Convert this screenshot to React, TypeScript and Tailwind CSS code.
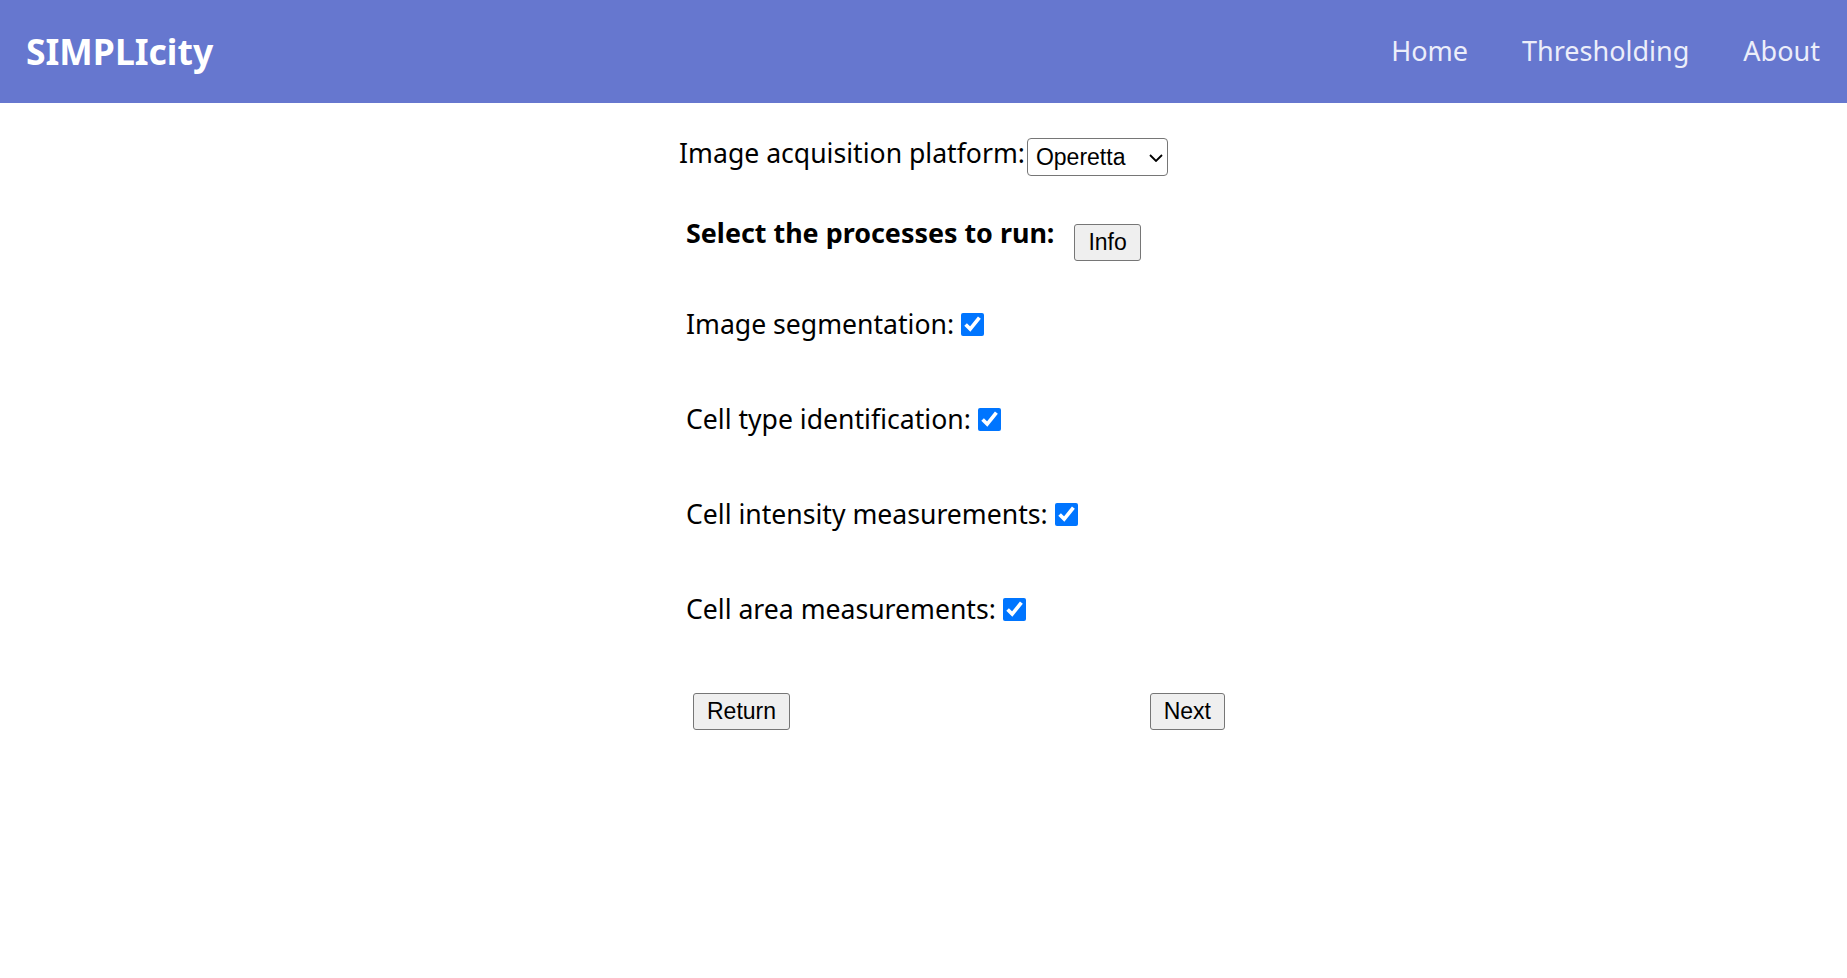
import { useState } from "react";

const processes = [
  "Image segmentation:",
  "Cell type identification:",
  "Cell intensity measurements:",
  "Cell area measurements:",
];

function Header() {
  return (
    <header className="flex h-[103px] items-center justify-between bg-[#6677cf] pl-[26px] pr-[27px]">
      <a href="#" className="text-[35.5px] font-bold text-white">
        SIMPLIcity
      </a>
      <nav className="flex items-center gap-[54px] text-[27px] text-[#eceefa]">
        <a href="#">Home</a>
        <a href="#">Thresholding</a>
        <a href="#">About</a>
      </nav>
    </header>
  );
}

const btn =
  "h-[37px] rounded-[3px] border border-[#767676] bg-[#efefef] px-[13px] font-['Liberation_Sans',Arial,sans-serif] text-[23px] leading-none text-black";

export default function App() {
  const [checked, setChecked] = useState(processes.map(() => true));

  return (
    <div className="min-h-screen bg-white font-['Noto_Sans',sans-serif] text-black">
      <Header />
      <main className="mx-auto w-[475px] pt-[31px]">
        <div className="flex items-center justify-center whitespace-nowrap">
          <label className="mb-[6px] text-[26.6px]">Image acquisition platform:</label>
          <div className="relative ml-[2px]">
            <select className="h-[38px] w-[141px] appearance-none rounded-[4px] border border-[#767676] bg-white pl-[8px] font-['Liberation_Sans',Arial,sans-serif] text-[23px] text-black">
              <option>Operetta</option>
            </select>
            <svg className="pointer-events-none absolute right-[5px] top-[16px]" width="14" height="8" viewBox="0 0 14 8">
              <path d="M1 1l6 6 6-6" fill="none" stroke="#000" strokeWidth="1.8" />
            </svg>
          </div>
        </div>

        <div className="mt-[35px] flex items-start whitespace-nowrap">
          <h3 className="text-[26.9px] font-bold leading-[36px]">Select the processes to run:</h3>
          <button className={`${btn} ml-[20px] mt-[9px] h-[36px]`}>Info</button>
        </div>

        <div className="mt-[44px] flex flex-col gap-[55px]">
          {processes.map((p, i) => (
            <label key={p} className="flex h-[40px] items-center whitespace-nowrap text-[26.6px]">
              {p}
              <input
                type="checkbox"
                checked={checked[i]}
                onChange={() => setChecked(checked.map((c, j) => (j === i ? !c : c)))}
                className="ml-[7px] h-[23px] w-[23px] accent-[#0075ff]"
              />
            </label>
          ))}
        </div>

        <div className="ml-[7px] mt-[63px] flex w-[532px] justify-between">
          <button className={btn}>Return</button>
          <button className={btn}>Next</button>
        </div>
      </main>
    </div>
  );
}
